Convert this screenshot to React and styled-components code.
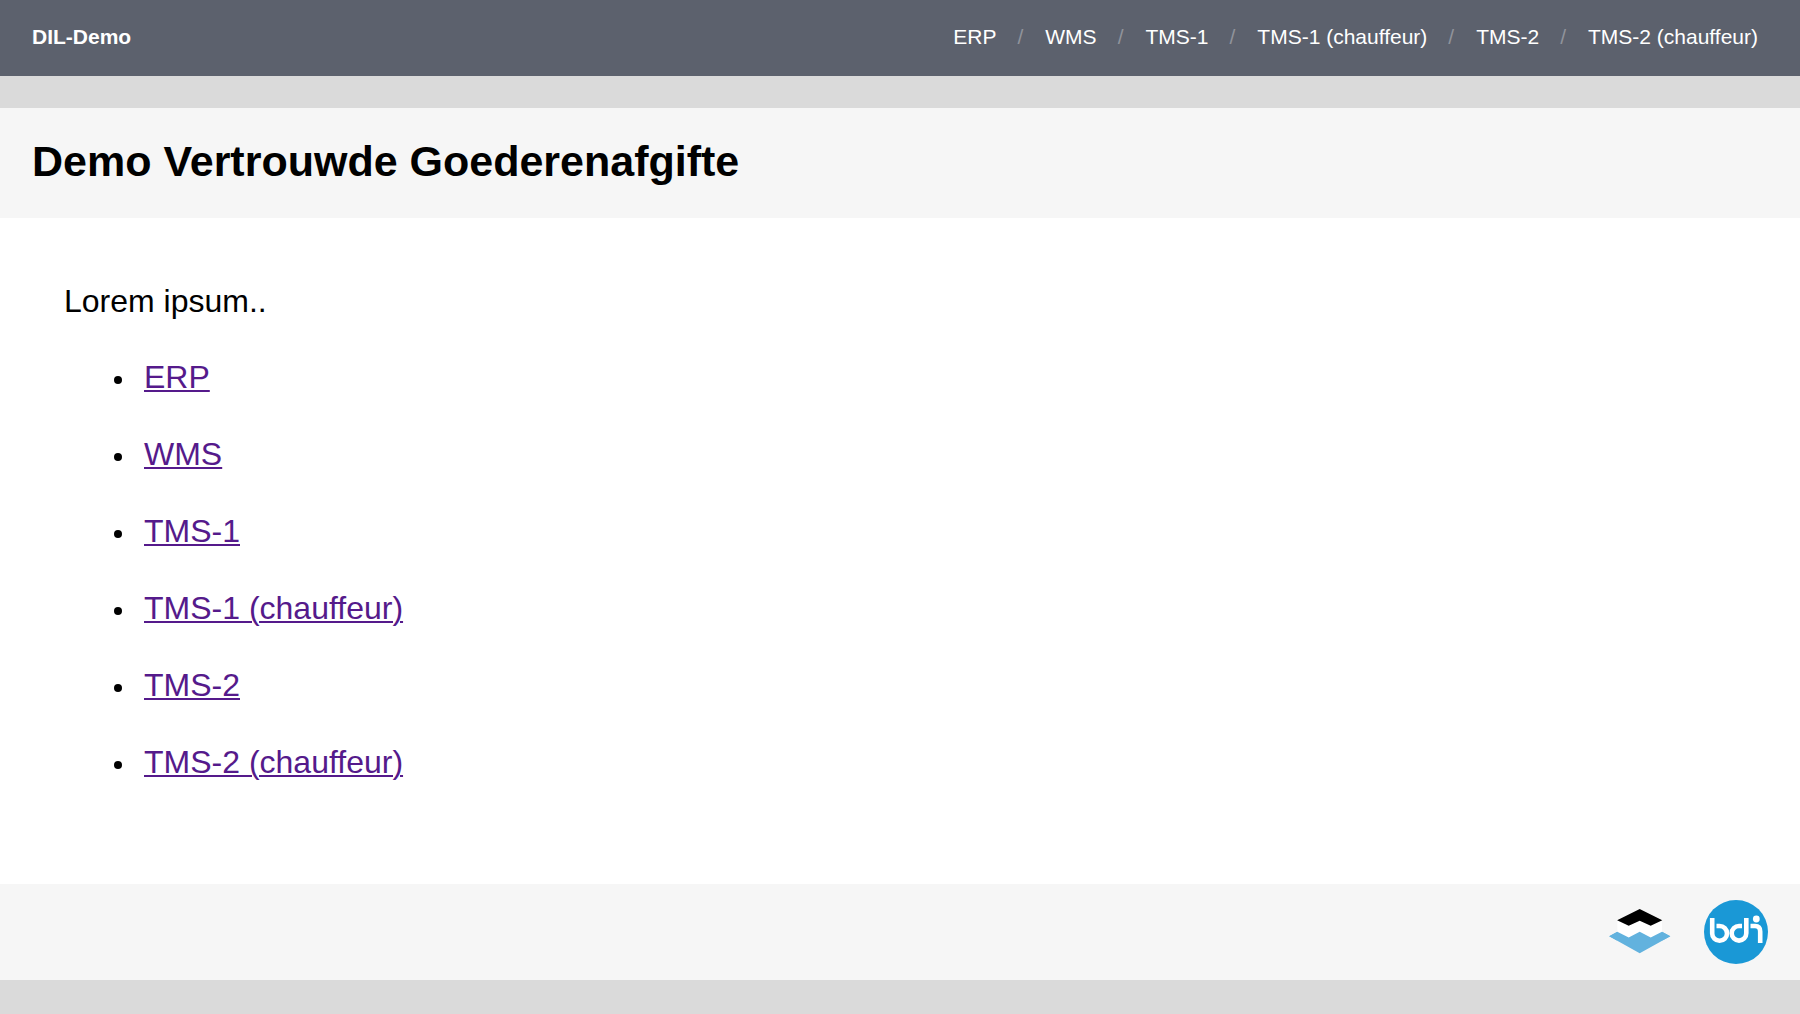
import React from "react";
import styled, { createGlobalStyle } from "styled-components";

const GlobalStyle = createGlobalStyle`
  * { box-sizing: border-box; }
  body {
    margin: 0;
    background: #dadada;
    color: #000;
    font-family: "Liberation Sans", Arial, sans-serif;
    font-size: 32px;
    line-height: 38px;
  }
`;

const TopBar = styled.header`
  display: flex;
  justify-content: space-between;
  padding: 24px 42px 27px 32px;
  background: #5c616d;
  color: #fff;
  font-size: 21px;
  line-height: 25px;
`;

const Brand = styled.a`
  color: inherit;
  font-weight: bold;
  text-decoration: none;
`;

const NavList = styled.ul`
  display: flex;
  margin: 0;
  padding: 0;
  list-style: none;
`;

const NavItem = styled.li`
  & + &::before {
    content: "/";
    margin: 0 22px 0 21px;
    color: #90939b;
  }
`;

const NavLink = styled.a`
  color: inherit;
  text-decoration: none;
`;

const Page = styled.div`
  margin: 32px 0;
  background: #fff;
`;

const TitleBar = styled.div`
  padding: 28px 32px 31px;
  background: #f6f6f6;
`;

const Title = styled.h1`
  margin: 0;
  font-size: 43px;
  line-height: 51px;
`;

const Content = styled.main`
  padding: 64px;
`;

const Intro = styled.p`
  margin: 0;
`;

const LinkList = styled.ul`
  display: grid;
  gap: 38px;
  margin: 38px 0;
  padding-left: 50px;
  line-height: 39px;
  list-style: none;
`;

const LinkItem = styled.li`
  display: flex;
  align-items: center;
  gap: 22px;

  &::before {
    content: "";
    width: 8px;
    height: 8px;
    margin-top: 4px;
    border-radius: 50%;
    background: #000;
  }
`;

const ContentLink = styled.a`
  color: #551a8b;
  text-decoration-thickness: 2px;
  text-underline-offset: 2px;
`;

const Footer = styled.footer`
  display: flex;
  justify-content: flex-end;
  align-items: center;
  gap: 32px;
  padding: 16px 32px;
  background: #f6f6f6;
`;

const Logo = styled.svg`
  display: block;
  width: 64px;
  height: 64px;
`;

const apps = [
  { name: "ERP", href: "#erp" },
  { name: "WMS", href: "#wms" },
  { name: "TMS-1", href: "#tms-1" },
  { name: "TMS-1 (chauffeur)", href: "#chauffeur-1" },
  { name: "TMS-2", href: "#tms-2" },
  { name: "TMS-2 (chauffeur)", href: "#chauffeur-2" },
];

function LayersLogo() {
  return (
    <Logo viewBox="0 0 64 64" aria-hidden="true">
      <path d="M9.3 20 31.7 9 54 20V40H9.3Z" fill="#fff" />
      <path d="M31.7 9 54.3 20.200 42.700 25.800 31.700 20.700 20.700 25.800 9.100 20.200Z" fill="#000" />
      <path d="M9.3 31.7 20.7 37.500 31.700 31.700 42.700 37.500 54 31.700 62.300 36.300 31.700 53.200 1.200 36.300Z" fill="#62b2de" />
      <path d="M9 31.900 1.200 36.300 9 40.600ZM54.300 31.900 62.300 36.300 54.300 40.600Z" fill="#62b2de" />
    </Logo>
  );
}

function BdiLogo() {
  return (
    <Logo viewBox="0 0 64 64" aria-hidden="true">
      <circle cx="32" cy="32" r="32" fill="#1a98d6" />
      <g fill="none" stroke="#fff" strokeWidth="4.6">
        <path d="M8.2 18V33.400A7.400 7.400 0 1 0 15.600 26H12.500" />
        <path d="M38 26H35A7.300 7.300 0 1 0 42.300 33.300V18" />
        <path d="M46.500 26H51Q56.200 26 56.200 31.500V43" />
      </g>
      <circle cx="52.300" cy="19" r="3.400" fill="#fff" />
    </Logo>
  );
}

export default function App() {
  return (
    <>
      <GlobalStyle />
      <TopBar>
        <Brand href="#home">DIL-Demo</Brand>
        <nav>
          <NavList>
            {apps.map((app) => (
              <NavItem key={app.name}>
                <NavLink href={app.href}>{app.name}</NavLink>
              </NavItem>
            ))}
          </NavList>
        </nav>
      </TopBar>
      <Page>
        <TitleBar>
          <Title>Demo Vertrouwde Goederenafgifte</Title>
        </TitleBar>
        <Content>
          <Intro>Lorem ipsum..</Intro>
          <LinkList>
            {apps.map((app) => (
              <LinkItem key={app.name}>
                <ContentLink href={app.href}>{app.name}</ContentLink>
              </LinkItem>
            ))}
          </LinkList>
        </Content>
        <Footer>
          <LayersLogo />
          <BdiLogo />
        </Footer>
      </Page>
    </>
  );
}
